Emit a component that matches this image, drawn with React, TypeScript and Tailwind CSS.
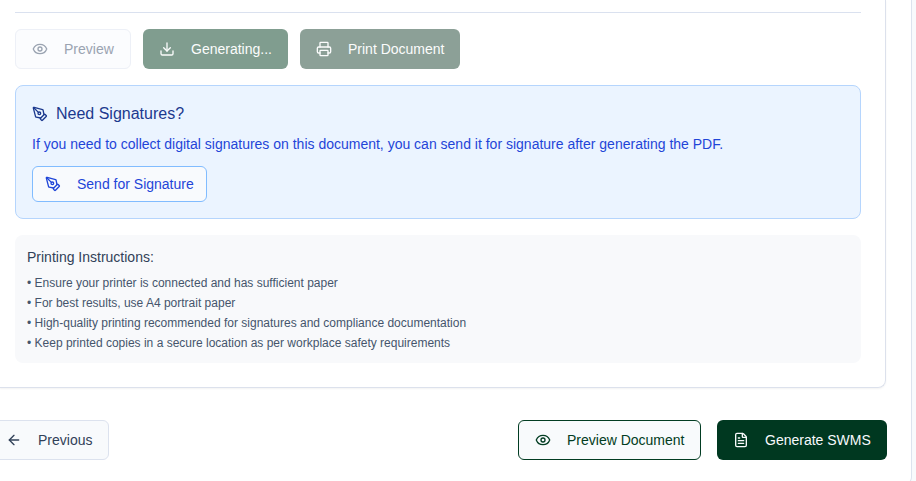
import type { ReactNode } from "react";
import { ArrowLeft, Download, Eye, FileText, PenTool, Printer } from "lucide-react";

const instructions = [
  "Ensure your printer is connected and has sufficient paper",
  "For best results, use A4 portrait paper",
  "High-quality printing recommended for signatures and compliance documentation",
  "Keep printed copies in a secure location as per workplace safety requirements",
];

function Button({ className, icon, children }: { className: string; icon: ReactNode; children: ReactNode }) {
  return (
    <button
      type="button"
      className={`flex shrink-0 items-center gap-4 whitespace-nowrap rounded-md text-sm [&_svg]:size-4 [&_svg]:shrink-0 ${className}`}
    >
      {icon}
      <span>{children}</span>
    </button>
  );
}

export default function App() {
  return (
    <div className="h-[481px] w-[916px] overflow-hidden bg-[#f8fafc] font-['Liberation_Sans',Arial,sans-serif]">
      <main className="h-[485px] w-[912px] rounded-br-lg border-r border-b border-[#dce3ee] bg-white">
        <section className="h-[388px] w-[886px] rounded-br-lg border-r border-b border-[#dce1ec] pr-6 pl-[15px] pt-3 shadow-[0_1px_2px_rgba(0,0,0,0.05)]">
          <div className="border-t border-[#dae1ef] pt-4">
            <div className="flex gap-3">
              <Button className="h-10 w-[116px] border border-[#edf0f7] bg-[#fbfcfe] px-4 text-[#9aa3b1]" icon={<Eye />}>
                Preview
              </Button>
              <Button className="h-10 w-[145px] bg-[#809d8f] px-4 text-[#fbfcfc]" icon={<Download />}>
                Generating...
              </Button>
              <Button className="h-10 w-[160px] bg-[#8ca097] px-4 text-[#fbfcfc]" icon={<Printer />}>
                Print Document
              </Button>
            </div>
          </div>

          <div className="mt-4 rounded-lg border border-[#b5d5fd] bg-[#ebf4ff] p-4">
            <h4 className="flex items-center gap-2 text-base text-[#1c398e]">
              <PenTool className="size-4" />
              Need Signatures?
            </h4>
            <p className="mt-2 text-sm text-[#1f45d8]">
              If you need to collect digital signatures on this document, you can send it for signature after generating the PDF.
            </p>
            <Button
              className="mt-3 h-9 w-[175px] border border-[#81bcff] bg-[#f8fafd] px-3 text-[#1f45d8]"
              icon={<PenTool />}
            >
              Send for Signature
            </Button>
          </div>

          <div className="mt-4 rounded-lg bg-[#f8f9fb] p-3">
            <p className="text-sm text-[#314158]">Printing Instructions:</p>
            <ul className="mt-2 space-y-1 text-xs text-[#45556c]">
              {instructions.map((line) => (
                <li key={line}>• {line}</li>
              ))}
            </ul>
          </div>
        </section>

        <footer className="mt-8 flex w-[887px] items-center justify-between">
          <Button
            className="-ml-3 h-10 w-[121px] border border-[#dce2ee] bg-[#f8fafc] pr-4 pl-[17px] text-[#314158]"
            icon={<ArrowLeft />}
          >
            Previous
          </Button>
          <div className="flex gap-4">
            <Button className="h-10 w-[183px] border border-[#023c22] bg-[#f8fafc] px-4 text-[#023c22]" icon={<Eye />}>
              Preview Document
            </Button>
            <Button className="h-10 w-[170px] bg-[#003820] px-4 text-[#f8fafc]" icon={<FileText />}>
              Generate SWMS
            </Button>
          </div>
        </footer>
      </main>
    </div>
  );
}
